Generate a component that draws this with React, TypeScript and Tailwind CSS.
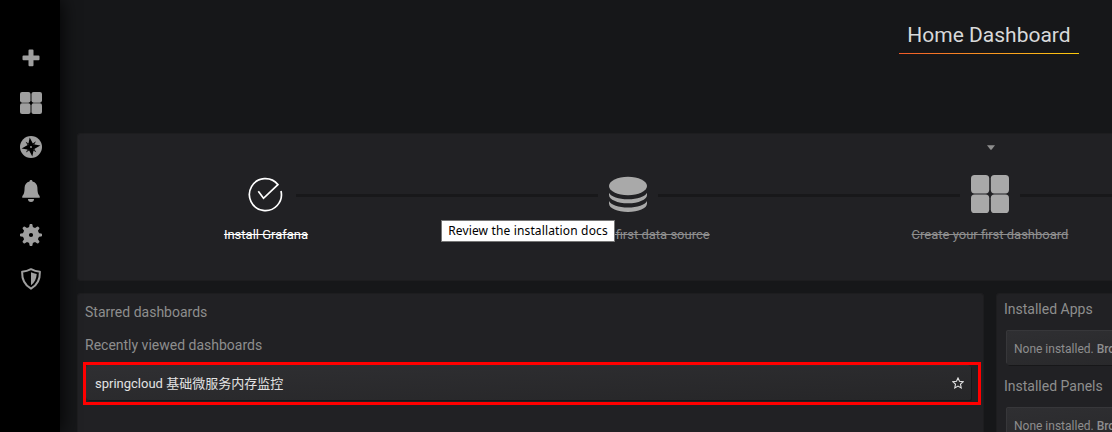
import React from "react";

function GridIcon({ size, color }: { size: number; color: string }) {
  return (
    <svg width={size} height={size} viewBox="0 0 38 38" fill={color} className="block">
      <rect x="0" y="0" width="18.2" height="18.4" rx="3.6" />
      <rect x="19.8" y="0" width="18.2" height="18.4" rx="3.6" />
      <rect x="0" y="19.6" width="18.2" height="18.4" rx="3.6" />
      <rect x="19.8" y="19.6" width="18.2" height="18.4" rx="3.6" />
    </svg>
  );
}

function PlusIcon() {
  return (
    <svg width="22" height="22" viewBox="0 0 22 22" className="block">
      <path d="M8.500 3.400a1 1 0 0 1 1-1h3a1 1 0 0 1 1 1v5h5a1 1 0 0 1 1 1v2.800a1 1 0 0 1-1 1h-5v5a1 1 0 0 1-1 1h-3a1 1 0 0 1-1-1v-5h-5a1 1 0 0 1-1-1V9.400a1 1 0 0 1 1-1h5z" fill="#9f9f9f" />
    </svg>
  );
}

function CompassIcon() {
  return (
    <svg width="22" height="22" viewBox="0 0 22 22" className="block">
      <circle cx="11" cy="11" r="11" fill="#9f9f9f" />
      <g fill="#000">
        <path d="M9.700 1.600 13.200 8.300 20.400 9.600 13.800 13.200 12.300 20.400 8.800 13.700 1.600 12.400 8.200 8.800z" />
        <path d="M15.900 5.200 13.200 11 16.300 16.200 11 13.200 5.900 16.600 8.800 11 5.600 5.700 11 8.800z" />
      </g>
      <circle cx="11" cy="11" r="0.9" fill="#9f9f9f" />
      <path d="M13.600 8.200l.9-.9M8.200 8.400l-.9-.9M13.800 13.600l.9.9M8.400 13.800l-.9.9" stroke="#8a8a8a" strokeWidth="0.6" />
    </svg>
  );
}

function BellIcon() {
  return (
    <svg width="22" height="22" viewBox="0 0 22 22" fill="#9f9f9f" className="block">
      <path d="M11 0a1.500 1.500 0 0 0-1.500 1.400C6.500 2 4.700 4.600 4.600 7.600 4.500 11.500 4.300 13.900 2.900 15.300c-.6.700-.8 1.500-.6 2.500h17.400c.2-1 0-1.800-.6-2.500-1.400-1.400-1.600-3.800-1.700-7.700C17.300 4.600 15.500 2 12.500 1.400A1.500 1.500 0 0 0 11 0z" />
      <path d="M8 19h6a3 3 0 0 1-6 0z" />
    </svg>
  );
}

function GearIcon() {
  const angles = [0, 45, 90, 135, 180, 225, 270, 315];
  return (
    <svg width="22" height="22" viewBox="0 0 22 22" fill="#9f9f9f" className="block">
      <path fillRule="evenodd" d="M11 2.900a8.100 8.100 0 1 0 0 16.200 8.100 8.100 0 0 0 0-16.200zm0 6a2.100 2.100 0 1 1 0 4.200 2.100 2.100 0 0 1 0-4.200z" />
      {angles.map((a) => (
        <path key={a} d="M8.400 4.500Q9.400 2.900 9.500 1q.1-1 .8-1h1.400q.7 0 .8 1 .1 1.900 1.100 3.500z" transform={`rotate(${a} 11 11)`} />
      ))}
    </svg>
  );
}

function ShieldIcon() {
  return (
    <svg width="22" height="22" viewBox="0 0 22 22" className="block">
      <path d="M11 1.200c2.800 1.500 5.700 2.300 8.900 2.500.2 7.800-2.400 13.300-8.900 17-6.500-3.700-9.100-9.200-8.900-17C5.300 3.500 8.200 2.700 11 1.200z" fill="none" stroke="#9f9f9f" strokeWidth="2" strokeLinejoin="round" />
      <path d="M11 4.300c1.900.9 3.700 1.400 5.700 1.700-.2 4.700-1.900 8.300-5.700 11.200z" fill="#9f9f9f" />
    </svg>
  );
}

function CheckIcon() {
  return (
    <svg width="38" height="38" viewBox="1 0 38 38" fill="none" stroke="#fff" strokeWidth="1.700" className="block">
      <path d="M12.300 16.300 17.500 23.300 31.900 9.600A16 16 0 1 0 35 16" strokeLinejoin="miter" />
    </svg>
  );
}

function DatabaseIcon() {
  return (
    <svg width="38" height="38" viewBox="0 -0.5 38 38" fill="#a9a9a9" className="block">
      <ellipse cx="19" cy="10.500" rx="19" ry="9.200" />
      <path d="M0 17.200c2 4.100 9.500 6.500 19 6.500s17-2.400 19-6.500v2.300c0 4.600-8.500 8.300-19 8.300S0 24.100 0 19.500z" />
      <path d="M0 25.500c2 4.100 9.500 6.500 19 6.500s17-2.400 19-6.500v2.400c0 4.900-8.500 8.500-19 8.500S0 32.800 0 27.900z" />
    </svg>
  );
}

function Connector({ className }: { className: string }) {
  return <div className={`mt-[60px] h-[3px] shrink-0 bg-[#18181a] ${className}`} />;
}

function Step({ icon, label, active }: { icon: React.ReactNode; label: string; active?: boolean }) {
  return (
    <div className="flex w-[60px] shrink-0 flex-col items-center pt-[41px]">
      {icon}
      <span className={`mt-[14px] text-[13px] leading-[16px] whitespace-nowrap line-through ${active ? "text-white" : "text-[#8e8e8e]"}`}>
        {label}
      </span>
    </div>
  );
}

function Empty() {
  return (
    <div className="ml-[3px] flex h-[34px] w-[300px] items-center rounded-[2px] bg-linear-to-br from-[#2f2f32] to-[#262628] pt-px pl-[7px] text-[12px] whitespace-pre text-[#8e8e8e] shadow-[-1px_-1px_0_0_rgba(255,255,255,0.1),1px_1px_0_0_rgba(0,0,0,0.3)]">
      None installed. <span className="font-medium">Browse Grafana.com</span>
    </div>
  );
}

export default function App() {
  return (
    <div className="relative flex h-[432px] w-[1112px] overflow-hidden bg-[#161719] font-['Roboto','Noto_Sans_CJK_SC',sans-serif]">
      <nav className="z-10 flex w-[60px] shrink-0 flex-col items-center gap-[22px] bg-black pt-[47px] pl-[2px] shadow-[0_0_20px_black]">
        <PlusIcon />
        <div className="mt-px"><GridIcon size={22} color="#9f9f9f" /></div>
        <CompassIcon />
        <BellIcon />
        <GearIcon />
        <ShieldIcon />
      </nav>

      <main className="flex w-[1052px] shrink-0 flex-col pl-[17px]">
        <header className="flex h-[133px] justify-end pr-[33px]">
          <div className="mt-[18px] flex h-[36px] w-[180px] flex-col">
            <h1 className="flex h-[35px] items-center justify-center text-[21px] leading-none whitespace-nowrap text-[#d8d9da]">Home Dashboard</h1>
            <div className="h-px bg-linear-to-r from-[#f05a28] to-[#fbca0a]" />
          </div>
        </header>

        <section className="relative flex h-[148px] shrink-0 overflow-hidden rounded-l-[3px] border border-r-0 border-[#1d1d1f] bg-[#212124] pl-[158px]">
          <Step icon={<CheckIcon />} label="Install Grafana" active />
          <Connector className="w-[302px]" />
          <Step icon={<DatabaseIcon />} label="Create your first data source" />
          <Connector className="w-[302px]" />
          <Step icon={<GridIcon size={38} color="#a9a9a9" />} label="Create your first dashboard" />
          <Connector className="w-[100px]" />
          <svg width="8" height="5" viewBox="0 0 8 5" className="absolute top-[11px] left-[909px]">
            <path d="M0 0.300h8L4.500 4.800h-1z" fill="#8e8e8e" />
          </svg>
        </section>

        <div className="mt-3 flex h-[139px] gap-3">
          <section className="h-full w-[907px] shrink-0 rounded-t-[3px] border border-b-0 border-[#1d1d1f] bg-[#212124] pt-[8px] text-[14px] text-[#8e8e8e]">
            <h2 className="pl-[7px] leading-[20px]">Starred dashboards</h2>
            <h2 className="mt-[13px] pl-[7px] leading-[20px]">Recently viewed dashboards</h2>
            <div className="mt-[7px] ml-[5px] h-[43px] w-[898px] border-[3px] border-[#ff0000] pt-px pl-px">
              <div className="flex h-[34px] w-[884px] items-center justify-between rounded-[2px] bg-linear-to-br from-[#2f2f32] to-[#262628] pr-[7px] pl-2 text-[13px] text-[#e3e3e3] shadow-[-1px_-1px_0_0_rgba(255,255,255,0.06),1px_1px_0_0_rgba(0,0,0,0.3)]">
                <span className="pt-[2px]">springcloud 基础微服务内存监控</span>
                <svg width="12" height="12" viewBox="0 0 12 12" fill="none" stroke="#e3e3e3" strokeWidth="1.100" strokeLinejoin="miter">
                  <path d="M6 1 7.500 4.300 11.200 4.700 8.500 7.200 9.200 10.900 6 9.100 2.800 10.900 3.500 7.200.8 4.700 4.500 4.300z" />
                </svg>
              </div>
            </div>
          </section>
          <section className="h-full w-[320px] shrink-0 rounded-tl-[3px] border border-b-0 border-[#1d1d1f] bg-[#212124] pt-[5px] pl-[7px] text-[14px] text-[#8e8e8e]">
            <h2 className="mb-[12px] leading-[20px]">Installed Apps</h2>
            <Empty />
            <h2 className="mt-[11px] mb-[12px] leading-[20px]">Installed Panels</h2>
            <Empty />
          </section>
        </div>
      </main>

      <div className="absolute top-[220px] left-[441px] z-20 flex h-[22px] w-[174px] items-center justify-center border border-[#767676] bg-white font-['Noto_Sans',sans-serif] text-[12px] tracking-[0.15px] whitespace-nowrap text-black">
        Review the installation docs
      </div>
    </div>
  );
}
